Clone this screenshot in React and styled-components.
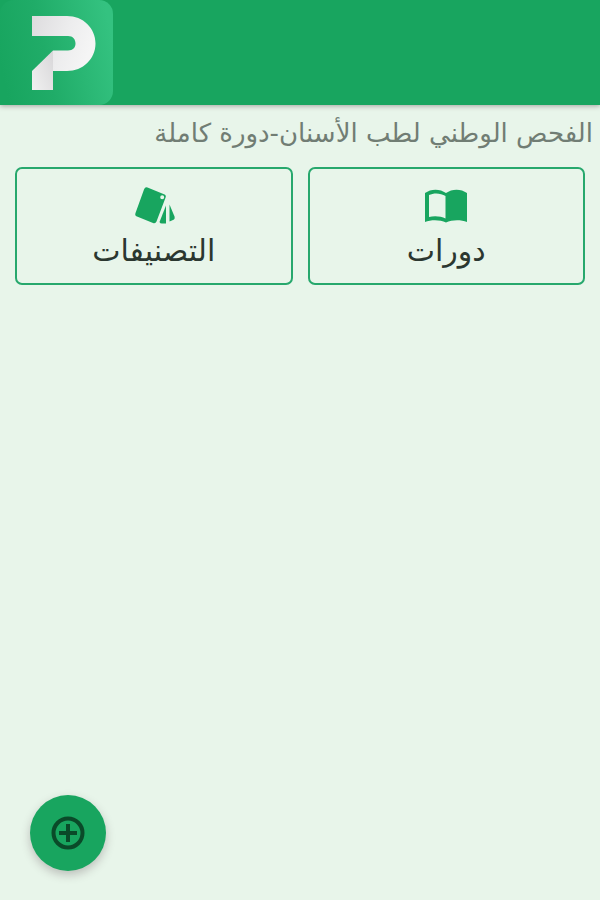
import React from 'react'
import styled, { createGlobalStyle } from 'styled-components'

const GlobalStyle = createGlobalStyle`
  * {
    box-sizing: border-box;
  }
  body {
    margin: 0;
    background: #e8f5ea;
    font-family: "DejaVu Sans", sans-serif;
  }
`

const Page = styled.div`
  min-height: 100vh;
`

const Header = styled.header`
  display: flex;
  background: #18a55f;
  box-shadow: 0 1px 5px rgba(60, 40, 50, 0.4);
`

const HomeLink = styled.a`
  display: block;
  svg {
    display: block;
  }
`

const CourseTitle = styled.h1`
  margin: 0;
  padding: 8px 7px 14px;
  font-size: 26px;
  line-height: 40px;
  font-weight: 400;
  color: #717d74;
`

const Menu = styled.nav`
  display: grid;
  grid-template-columns: 1fr 1fr;
  gap: 15px;
  padding: 0 15px;
`

const MenuButton = styled.button`
  display: flex;
  flex-direction: column;
  align-items: center;
  padding: 14px 8px 10px;
  background: transparent;
  border: 2px solid #27a86d;
  border-radius: 7px;
  color: #2b3730;
  font-family: inherit;
  font-size: 30px;
  line-height: 44px;
  cursor: pointer;
  svg {
    color: #18a55f;
  }
`

const AddButton = styled.button`
  position: fixed;
  left: 30px;
  bottom: 29px;
  display: flex;
  align-items: center;
  justify-content: center;
  width: 76px;
  height: 76px;
  padding: 0;
  border: 0;
  border-radius: 50%;
  background: #18a55f;
  color: #0a4a29;
  box-shadow: 0 4px 10px rgba(60, 40, 50, 0.26);
  cursor: pointer;
`

const Logo = () => (
  <svg width="113" height="105" viewBox="0 0 113 105" aria-hidden="true">
    <defs>
      <linearGradient id="tile" x1="0" y1="0.6" x2="1" y2="0.4">
        <stop offset="0" stopColor="#18a55f" />
        <stop offset="0.4" stopColor="#20ac68" />
        <stop offset="1" stopColor="#34c280" />
      </linearGradient>
      <linearGradient id="letter" x1="0" y1="0" x2="1" y2="0.3">
        <stop offset="0" stopColor="#dddcde" />
        <stop offset="0.6" stopColor="#ededee" />
        <stop offset="1" stopColor="#f5f5f5" />
      </linearGradient>
      <linearGradient id="stem" x1="0" y1="1" x2="1" y2="0.2">
        <stop offset="0" stopColor="#f1f1f1" />
        <stop offset="1" stopColor="#dad9db" />
      </linearGradient>
    </defs>
    <rect width="113" height="105" rx="14" fill="url(#tile)" />
    <path
      d="M32 16H67C83 16 95.500 28 95.500 43.500S83 71 67 71H53V50.500H68C73 50.500 75.500 47.500 75.500 43.500S73 36 68 36H32Z"
      fill="url(#letter)"
    />
    <path d="M53 50.500V90H32V71Z" fill="url(#stem)" />
  </svg>
)

const BookIcon = () => (
  <svg width="46" height="46" viewBox="0 0 46 46" fill="currentColor" aria-hidden="true">
    <path
      fillRule="evenodd"
      d="M2 10C8 5.500 17 5.500 23 10C29 5.500 38 5.500 44 10V39C38 36.500 29 36.500 23 39.500C17 36.500 8 36.500 2 39ZM6 12V34C11 32.500 18 33 22.500 35.500V13C18 10 11 9.500 6 12Z"
    />
  </svg>
)

const CardsIcon = () => (
  <svg width="46" height="46" viewBox="0 0 46 46" fill="currentColor" aria-hidden="true">
    <path
      fillRule="evenodd"
      d="M16.500 4.500L33 11.200Q35.500 12.200 34.600 14.600L25.500 38.500Q24.500 41 22 40L6 33.500Q3.500 32.500 4.500 30L13 6.500Q14 3.700 16.500 4.500ZM31.200 12.300A2 2 0 1 0 31.200 16.300A2 2 0 1 0 31.200 12.300Z"
    />
    <path d="M35 22.500V40.500H31Q29 40.500 28.500 39Z" />
    <path d="M38.500 21.500L43.500 33.500Q44.300 36 42 37L38.500 38.500Z" />
  </svg>
)

const PlusIcon = () => (
  <svg width="40" height="40" viewBox="0 0 40 40" fill="none" stroke="currentColor" strokeWidth="4" aria-hidden="true">
    <circle cx="20" cy="20" r="14.500" />
    <path d="M20 11V29M11 20H29" />
  </svg>
)

const App = () => {
  return (
    <Page dir="rtl" lang="ar">
      <GlobalStyle />
      <Header dir="ltr">
        <HomeLink href="#" aria-label="الرئيسية">
          <Logo />
        </HomeLink>
      </Header>
      <main>
        <CourseTitle>الفحص الوطني لطب الأسنان-دورة كاملة</CourseTitle>
        <Menu>
          <MenuButton type="button">
            <BookIcon />
            دورات
          </MenuButton>
          <MenuButton type="button">
            <CardsIcon />
            التصنيفات
          </MenuButton>
        </Menu>
      </main>
      <AddButton type="button" aria-label="إضافة">
        <PlusIcon />
      </AddButton>
    </Page>
  )
}

export default App
